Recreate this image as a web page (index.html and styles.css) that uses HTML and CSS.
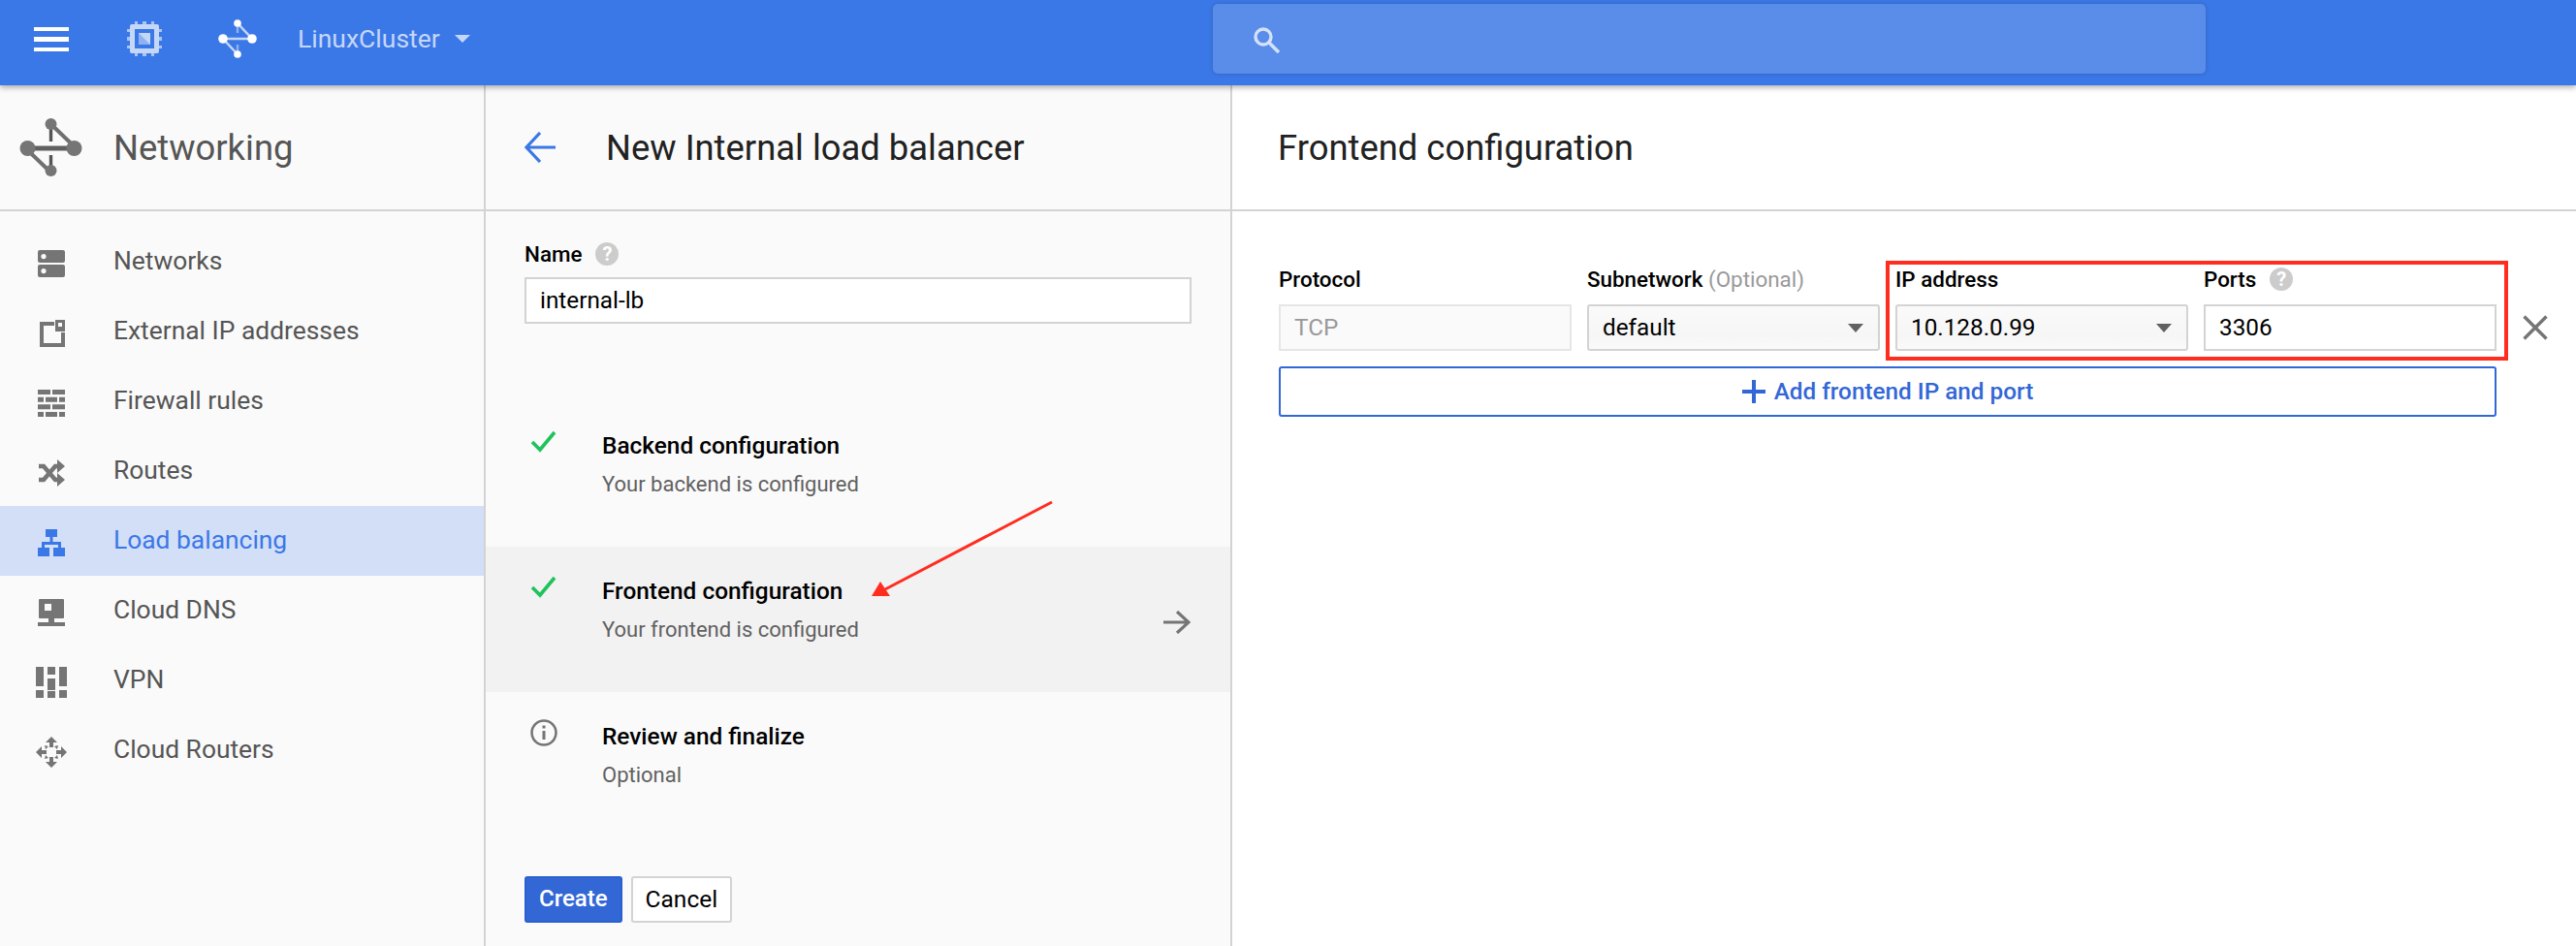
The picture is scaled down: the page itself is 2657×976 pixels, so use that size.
FILE: index.html
```html
<!DOCTYPE html>
<html lang="en">
<head>
<meta charset="utf-8">
<title>New Internal load balancer</title>
<link rel="stylesheet" href="styles.css">
</head>
<body>
<header class="topbar">
  <svg class="tb-menu" viewBox="0 0 36 25"><path d="M0 0h36v4H0zM0 10h36v5H0zM0 21h36v4H0z" fill="#fff"/></svg>
  <svg class="tb-chip" viewBox="0 0 36 36"><path d="M5 3h26a2 2 0 0 1 2 2v26a2 2 0 0 1-2 2H5a2 2 0 0 1-2-2V5a2 2 0 0 1 2-2zm3 5v20h20V8z" fill="#c5d7f7"/><path d="M8 0h3v3H8zM16 0h4v3h-4zM25 0h3v3h-3zM8 33h3v3H8zM16 33h4v3h-4zM25 33h3v3h-3zM0 8h3v3H0zM0 16h3v4H0zM0 25h3v3H0zM33 8h3v3h-3zM33 16h3v4h-3zM33 25h3v3h-3z" fill="#a9c3f4"/><path d="M12 12h12v12H12z" fill="#8fb1f0"/><path d="M12 12h12v12z" fill="#c5d7f7"/></svg>
  <svg class="tb-net" viewBox="0 0 40 40"><path d="M20 4v10M20 26v10" stroke="#8fb1f0" stroke-width="2.4" fill="none"/><path d="M20 4l15 16H5l15 16" stroke="#c5d7f7" stroke-width="2.4" fill="none"/><circle cx="20" cy="4" r="3.8" fill="#fff"/><circle cx="35" cy="20" r="4.8" fill="#fff"/><circle cx="5" cy="20" r="4.8" fill="#fff"/><circle cx="20" cy="36" r="3.8" fill="#fff"/></svg>
  <span class="tb-project">LinuxCluster</span>
  <span class="tb-caret"></span>
  <div class="tb-search">
    <svg class="tb-search-icon" viewBox="0 0 27 27"><circle cx="10" cy="10" r="8" fill="none" stroke="#d3e1fa" stroke-width="3.400"/><path d="M16 16l10 10" stroke="#d3e1fa" stroke-width="3.600"/></svg>
  </div>
</header>
<main class="layout">
  <aside class="sidebar">
    <div class="panel-head side-head">
      <svg class="side-logo" viewBox="0 0 64 60"><path d="M32 6v18M32 38v18" stroke="#555" stroke-width="3.4" fill="none"/><path d="M32 6l26 25H6l26 25" stroke="#707070" stroke-width="4" fill="none"/><path d="M12 31h40" stroke="#606060" stroke-width="5"/><circle cx="32" cy="6" r="6" fill="#757575"/><circle cx="56" cy="31" r="8" fill="#757575"/><circle cx="8" cy="31" r="8" fill="#757575"/><circle cx="32" cy="54" r="6" fill="#757575"/></svg>
      <h1 class="side-title">Networking</h1>
    </div>
    <nav class="nav">
      <a class="nav-item"><svg class="nav-icon" viewBox="0 0 28 28"><path fill-rule="evenodd" d="M2 0h24a2 2 0 0 1 2 2v9a2 2 0 0 1-2 2H2a2 2 0 0 1-2-2V2a2 2 0 0 1 2-2zm4 4a2.6 2.6 0 1 0 0 5.2A2.6 2.6 0 0 0 6 4zM2 15h24a2 2 0 0 1 2 2v9a2 2 0 0 1-2 2H2a2 2 0 0 1-2-2v-9a2 2 0 0 1 2-2zm4 4a2.6 2.6 0 1 0 0 5.2A2.6 2.6 0 0 0 6 19z" fill="#757575"/></svg>Networks</a>
      <a class="nav-item"><svg class="nav-icon" viewBox="0 0 28 28"><path fill-rule="evenodd" d="M2 2h15v4H6v18h18V13h4v15H2zM18 0h10v12H18zm3 3v4h4V3z" fill="#757575"/></svg>External IP addresses</a>
      <a class="nav-item"><svg class="nav-icon" viewBox="0 0 28 28"><path d="M0 0h13v5H0zM15 0h13v5H15zM0 7.700h6v5H0zM8 7.700h12v5H8zM22 7.700h6v5h-6zM0 15.300h13v5H0zM15 15.300h13v5H15zM0 23h6v5H0zM8 23h12v5H8zM22 23h6v5h-6z" fill="#757575"/></svg>Firewall rules</a>
      <a class="nav-item"><svg class="nav-icon" viewBox="0 0 28 28"><path d="M1 7h5l12 14h4M1 21h5L18 7h4" fill="none" stroke="#757575" stroke-width="4.500"/><path d="M20 0l8 7-8 7zM20 14l8 7-8 7z" fill="#757575"/></svg>Routes</a>
      <a class="nav-item active"><svg class="nav-icon" viewBox="0 0 28 28"><path d="M8 0h12v8h-4.500v5H24v6h4v9H16v-9h5v-3H7v3h5v9H0v-9h4v-6h8.500V8H8z" fill="#3b78e7"/></svg>Load balancing</a>
      <a class="nav-item"><svg class="nav-icon" viewBox="0 0 28 28"><path fill-rule="evenodd" d="M2 0h24a1 1 0 0 1 1 1v18a1 1 0 0 1-1 1h-9v4h11v4H0v-4h11v-4H2a1 1 0 0 1-1-1V1a1 1 0 0 1 1-1zm5 5v7h7V5z" fill="#757575"/></svg>Cloud DNS</a>
      <a class="nav-item"><svg class="nav-icon wide-icon" viewBox="0 0 32 32"><path d="M0 0h8v20H0zM12 0h8v8h-8zM24 0h8v20h-8zM12 12h8v12h-8zM0 24h8v8H0zM12 25h8v7h-8zM24 24h8v8h-8z" fill="#757575"/></svg>VPN</a>
      <a class="nav-item"><svg class="nav-icon wide-icon" viewBox="0 0 32 32"><path d="M16 0l6 6h-4v5h-4V6h-4zM16 32l-6-6h4v-5h4v5h4zM0 16l6-6v4h5v4H6v4zM32 16l-6 6v-4h-5v-4h5v-4z" fill="#757575"/><path d="M9 9l4 1-3 3zM23 9l-4 1 3 3zM9 23l4-1-3-3zM23 23l-4-1 3-3z" fill="#757575"/></svg>Cloud Routers</a>
    </nav>
  </aside>
  <section class="wizard">
    <div class="panel-head wizard-head">
      <svg class="back" viewBox="0 0 32 32"><path d="M32 16H3M16 1L2 16l14 15" fill="none" stroke="#3b78e7" stroke-width="3.200"/></svg>
      <h2 class="wizard-title">New Internal load balancer</h2>
    </div>
    <div class="name-block">
      <div class="label name-label">Name<span class="help">?</span></div>
      <div class="input">internal-lb</div>
    </div>
    <div class="steps">
      <div class="step">
        <svg class="step-icon" viewBox="0 0 28 24"><path d="M2 12l8 8L25 2" fill="none" stroke="#1fc25c" stroke-width="3.600"/></svg>
        <div class="step-body"><div class="step-title">Backend configuration</div><div class="step-sub">Your backend is configured</div></div>
      </div>
      <div class="step current">
        <svg class="step-icon" viewBox="0 0 28 24"><path d="M2 12l8 8L25 2" fill="none" stroke="#1fc25c" stroke-width="3.600"/></svg>
        <div class="step-body"><div class="step-title">Frontend configuration</div><div class="step-sub">Your frontend is configured</div></div>
        <svg class="step-go" viewBox="0 0 28 24"><path d="M0 12h25M14 1l12 11-12 11" fill="none" stroke="#757575" stroke-width="3.200"/></svg>
      </div>
      <div class="step">
        <svg class="step-icon info" viewBox="0 0 28 28"><circle cx="14" cy="14" r="12.500" fill="none" stroke="#757575" stroke-width="2.600"/><path d="M12.500 12h3v9h-3zM12.500 6.500h3v3h-3z" fill="#757575"/></svg>
        <div class="step-body"><div class="step-title">Review and finalize</div><div class="step-sub">Optional</div></div>
      </div>
    </div>
    <div class="actions">
      <button class="btn primary">Create</button>
      <button class="btn">Cancel</button>
    </div>
  </section>
  <section class="detail">
    <div class="panel-head detail-head"><h2 class="detail-title">Frontend configuration</h2></div>
    <div class="form">
      <div class="fields">
        <div class="field"><div class="label">Protocol</div><div class="input disabled">TCP</div></div>
        <div class="field"><div class="label">Subnetwork <span class="optional">(Optional)</span></div><div class="input select">default<span class="arrow"></span></div></div>
        <div class="field"><div class="label">IP address</div><div class="input select">10.128.0.99<span class="arrow"></span></div></div>
        <div class="field"><div class="label">Ports<span class="help">?</span></div><div class="input">3306</div></div>
        <svg class="remove" viewBox="0 0 26 26"><path d="M1.500 1.500l23 23M24.500 1.500l-23 23" stroke="#757575" stroke-width="3.400"/></svg>
      </div>
      <button class="add-btn"><svg class="plus" viewBox="0 0 24 24"><path d="M10 0h4v10h10v4H14v10h-4V14H0v-4h10z" fill="#3367d6"/></svg>Add frontend IP and port</button>
    </div>
  </section>
</main>
<div class="callout-box"></div>
<svg class="callout-arrow" viewBox="0 0 200 110"><path d="M186 3L14 93" stroke="#ff2d1f" stroke-width="3" fill="none"/><path d="M0 100h19L9 85z" fill="#ff2d1f"/></svg>
</body>
</html>
```
FILE: styles.css
```css
* { box-sizing: border-box; }
html, body { margin: 0; height: 976px; overflow: hidden; background: #fff; }
body { font-family: Roboto, "Noto Sans", sans-serif; color: #000; position: relative; width: 2657px; }

.topbar { height: 88px; background: #3b78e7; display: flex; align-items: center; box-shadow: 0 2px 6px rgba(0,0,0,.35); position: relative; z-index: 2; }
.tb-menu { width: 36px; height: 25px; margin-left: 35px; margin-top: -8px; flex: none; }
.tb-chip { width: 36px; height: 36px; margin-left: 60px; margin-top: -8px; flex: none; }
.tb-net { width: 40px; height: 40px; margin-left: 58px; margin-top: -8px; flex: none; }
.tb-project { font-size: 26.500px; color: #c5d7f7; margin-left: 42px; margin-top: -9px; }
.tb-caret { width: 0; height: 0; border: 8px solid transparent; border-top: 8px solid #c5d7f7; border-bottom: 0; margin-left: 15px; margin-top: -9px; }
.tb-search { position: absolute; left: 1251px; top: 4px; width: 1024px; height: 72px; background: #5a8dea; border-radius: 5px; box-shadow: 0 0 4px rgba(0,0,0,.2); display: flex; align-items: center; }
.tb-search-icon { width: 27px; height: 27px; margin-left: 42px; margin-top: 3px; }

.layout { display: flex; height: 888px; }
.panel-head { height: 130px; border-bottom: 2px solid #d3d3d3; display: flex; align-items: center; }
.sidebar { width: 501px; flex: none; background: #fafafa; border-right: 2px solid #d3d3d3; }
.side-head { padding-left: 20px; }
.side-logo { width: 65px; height: 60px; flex: none; }
.side-title { font-size: 36.400px; font-weight: 400; color: #555; margin: 0 0 0 32px; }
.nav { padding-top: 16px; }
.nav-item { height: 72px; display: flex; align-items: center; padding: 0 0 2px 39px; font-size: 26.400px; color: #555; }
.nav-icon { width: 28px; height: 28px; flex: none; margin: 6px 50px 0 0; }
.wide-icon { width: 32px; height: 32px; margin-left: -2px; margin-right: 48px; }
.nav-item.active { background: #d2dff7; color: #3b78e7; }

.wizard { width: 770px; flex: none; background: #fafafa; border-right: 2px solid #d3d3d3; display: flex; flex-direction: column; }
.wizard-head { padding-left: 40px; }
.back { width: 32px; height: 32px; flex: none; }
.wizard-title { font-size: 36.400px; font-weight: 400; color: #212121; margin: 0 0 0 52px; }
.name-block { padding: 30px 40px 0 40px; }
.label { font-size: 22.400px; font-weight: 500; color: #000; height: 28px; display: flex; align-items: center; margin-bottom: 12px; white-space: pre; }
.name-label { margin-bottom: 10px; }
.help { width: 24px; height: 24px; border-radius: 50%; background: #ccc; color: #fff; font-size: 20px; font-weight: 700; display: inline-flex; align-items: center; justify-content: center; margin-left: 14px; }
.input { height: 48px; border: 2px solid #d3d3d3; background: #fff; font-size: 24.300px; color: #000; display: flex; align-items: center; padding: 0 0 2px 14px; position: relative; }
.input.disabled { background: #fafafa; border-color: #e6e6e6; color: #999; }
.input.select { background: linear-gradient(#fafafa, #f6f6f6 70%, #fafafa); border-radius: 3px; }
.arrow { position: absolute; right: 15px; top: 18px; width: 0; height: 0; border: 8px solid transparent; border-top: 9px solid #616161; border-bottom: 0; }

.steps { margin-top: 80px; }
.step { height: 150px; padding: 0 41px 0 46px; display: flex; align-items: flex-start; position: relative; }
.step.current { background: #f2f2f2; }
.step-icon { width: 28px; height: 24px; flex: none; margin-top: 30px; }
.step-icon.info { height: 28px; margin-top: 28px; }
.step-body { margin-left: 46px; padding-top: 32px; }
.step-title { font-size: 24.400px; font-weight: 500; line-height: 28px; color: #000; }
.step-sub { font-size: 22px; line-height: 28px; color: #616161; margin-top: 12px; }
.step-go { width: 28px; height: 24px; position: absolute; right: 41px; top: 66px; }
.actions { margin-top: 40px; padding-left: 40px; display: flex; gap: 9px; }
.btn { height: 48px; padding: 0 13px 2px; font: 400 24.500px Roboto, sans-serif; background: #fff; border: 2px solid #d3d3d3; border-radius: 3px; color: #000; }
.btn.primary { background: #3367d6; border-color: #2a5fd0; color: #fff; font-weight: 500; font-size: 24px; }

.detail { flex: 1; background: #fff; }
.detail-head { padding-left: 47px; }
.detail-title { font-size: 36.400px; font-weight: 400; color: #212121; margin: 0; }
.form { padding: 56px 0 0 48px; width: 1304px; }
.fields { display: flex; gap: 16px; position: relative; width: 1256px; }
.field { flex: 1 1 0; min-width: 0; }
.optional { font-weight: 400; color: #999; }
.remove { width: 26px; height: 26px; position: absolute; right: -53px; top: 51px; }
.add-btn { margin-top: 16px; width: 1256px; height: 52px; padding-bottom: 2px; background: #fff; border: 2px solid #3367d6; border-radius: 3px; color: #3367d6; font: 500 24.300px Roboto, sans-serif; display: flex; align-items: center; justify-content: center; }
.plus { width: 24px; height: 24px; margin-right: 9px; }

.callout-box { position: absolute; left: 1945px; top: 269px; width: 642px; height: 103px; border: 4px solid #ff2d1f; }
.callout-arrow { position: absolute; left: 899px; top: 515px; width: 200px; height: 110px; }
```
